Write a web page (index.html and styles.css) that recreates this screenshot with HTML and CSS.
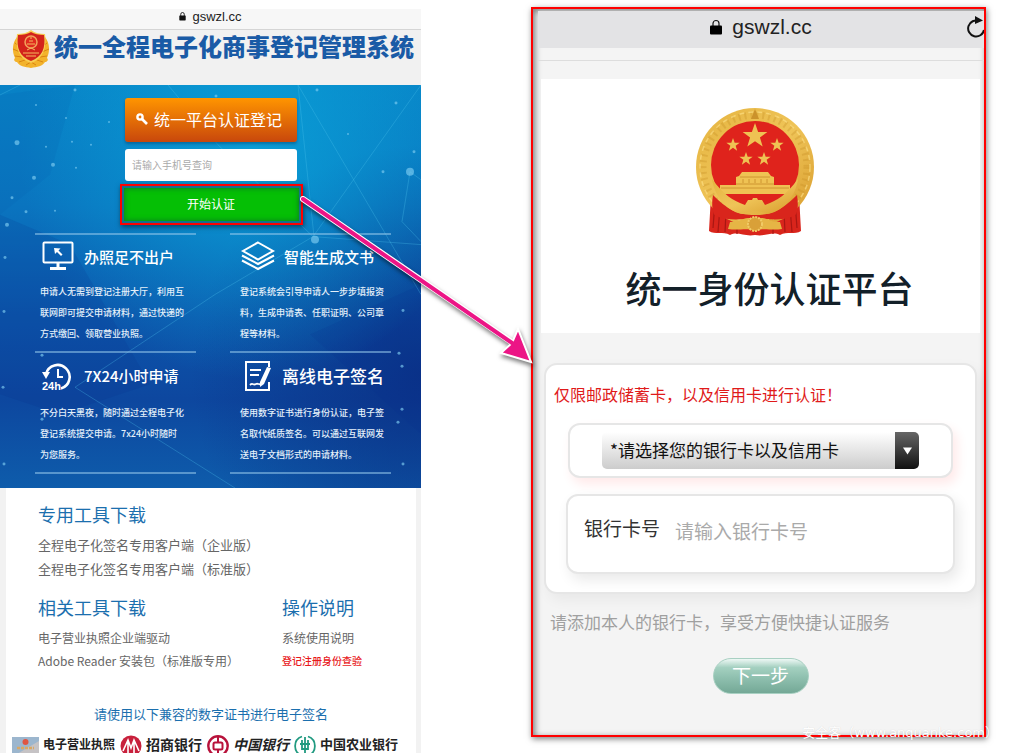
FILE: index.html
```html
<!DOCTYPE html>
<html lang="zh-CN">
<head>
    <meta charset="utf-8">
    <meta name="viewport" content="width=device-width, initial-scale=1.0">
    <title>gswzl.cc</title>
    <link rel="stylesheet" href="styles.css">
</head>
<body>
<main class="figure">
    <section class="phone">
        <div class="address">
            <svg class="lock" viewBox="0 0 12 16"><path d="M3 8V5a3 3 0 0 1 6 0v3" fill="none" stroke="#111" stroke-width="1.500"/><rect x="0.500" y="7" width="11" height="8.500" rx="1" fill="#111"/></svg>
            <span>gswzl.cc</span>
        </div>
        <header class="site-header">
            <svg class="badge" viewBox="0 0 38 38">
                <path d="M5 7C0 13 0 22 3 28c-2 2 0 4 2 4 2 4 8 5 14 6 6-1 12-2 14-6 2 0 4-2 2-4 3-6 3-15-2-21l-4 4v12L19 33 9 23V11z" fill="#f3b32c"/>
                <path d="M3 13l5 4M1 19l7 3M3 26l7 1M7 32l6-2M35 13l-5 4M37 19l-7 3M35 26l-7 1M31 32l-6-2M14 35l5-3 5 3" stroke="#d98512" fill="none"/>
                <path d="M5 4c5 0 10-1 14-4 4 3 9 4 14 4 2 14-2 25-14 29C7 29 3 18 5 4z" fill="#f8cf54"/>
                <path d="M6 5c5 0 10-1 13-3 3 2 8 3 13 3 2 13-2 22-13 26C8 27 4 18 6 5z" fill="#d3231b"/>
                <circle cx="19" cy="12" r="6" fill="#e02b1e" stroke="#f2a35b" stroke-width="1.500"/>
                <path d="M15 14h8M17 11h4M19 7v2M15 20l4-2 4 2M11 23h16M14 26h10" stroke="#f4bd5f" fill="none"/>
            </svg>
            <h1>统一全程电子化商事登记管理系统</h1>
        </header>
        <div class="hero">
            <svg class="network" viewBox="0 0 421 404" preserveAspectRatio="none">
                <path d="M0 10L75 0 50 90 0 130z" fill="#065fae" opacity=".15"/>
                <path d="M0 130L70 160 150 300 60 330 0 310z" fill="#062c8a" opacity=".14"/>
                <path d="M421 200L310 250 421 350z" fill="#062c8a" opacity=".12"/>
                <path d="M75 303L215 210M215 210L313 152M75 303L235 404M168 0l50 60 95 92M298 0l16 152M298 0l123 210M313 152L421 0M0 10L20 0M313 152L421 160M410 87l-8 50 19 20M410 87l11 8" stroke="#4fc6ee" opacity=".3" fill="none"/>
                <g fill="#7fcdf2" opacity=".65">
                    <circle cx="315" cy="155" r="4"/><circle cx="410" cy="87" r="4"/><circle cx="17" cy="58" r="2.500"/><circle cx="53" cy="80" r="2"/><circle cx="34" cy="93" r="2"/><circle cx="216" cy="11" r="1.500"/><circle cx="317" cy="5" r="1.500"/><circle cx="396" cy="18" r="1.500"/><circle cx="414" cy="67" r="1.500"/><circle cx="383" cy="87" r="1.500"/><circle cx="348" cy="49" r="1"/><circle cx="75" cy="5" r="1.500"/><circle cx="66" cy="33" r="1"/><circle cx="109" cy="37" r="1"/><circle cx="36" cy="20" r="1"/><circle cx="72" cy="57" r="1"/><circle cx="46" cy="62" r="1"/><circle cx="91" cy="60" r="1"/><circle cx="76" cy="83" r="1"/><circle cx="12" cy="113" r="1.500"/><circle cx="26" cy="127" r="1.500"/><circle cx="55" cy="126" r="1"/><circle cx="7" cy="140" r="2"/><circle cx="4" cy="227" r="1.500"/><circle cx="5" cy="173" r="1.500"/><circle cx="42" cy="271" r="1.500"/><circle cx="3" cy="303" r="1.500"/><circle cx="42" cy="335" r="1.500"/><circle cx="4" cy="380" r="1.500"/><circle cx="403" cy="226" r="1.500"/><circle cx="399" cy="269" r="1.500"/><circle cx="402" cy="282" r="1.500"/><circle cx="402" cy="325" r="1.500"/><circle cx="398" cy="338" r="1.500"/><circle cx="403" cy="380" r="1.500"/>
                </g>
            </svg>
            <div class="signup">
                <button type="button" class="register">
                    <svg class="key" viewBox="0 0 12 12"><circle cx="4" cy="4" r="2.600" fill="none" stroke="#fff" stroke-width="2.400"/><path d="M6 6l5 5" stroke="#fff" stroke-width="2.600"/></svg>
                    统一平台认证登记
                </button>
                <input type="text" class="mobile" placeholder="请输入手机号查询" aria-label="手机号">
                <div class="marked"><button type="button" class="start">开始认证</button></div>
            </div>
            <div class="features">
                <article class="feature">
                    <h2>
                        <svg class="icon" viewBox="0 0 32 30" fill="none" stroke="#fff" stroke-width="2"><rect x="1.500" y="1.500" width="29" height="20" rx="1"/><path d="M16 22v5M8 27.500h16" stroke-width="3"/><path d="M12 7l1 6 2-2 4 4 1.500-1.500-4-4 2-2z" fill="#fff" stroke="none"/></svg>
                        办照足不出户
                    </h2>
                    <p>申请人无需到登记注册大厅，利用互<br>联网即可提交申请材料，通过快递的<br>方式缴回、领取营业执照。</p>
                </article>
                <article class="feature right">
                    <h2>
                        <svg class="icon" viewBox="0 0 34 30" fill="none" stroke="#fff" stroke-width="2"><path d="M17 1.500L32 10 17 18.500 2 10z"/><path d="M1 14.500L17 23l16-8.500M1 19.500L17 28l16-8.500"/></svg>
                        智能生成文书
                    </h2>
                    <p>登记系统会引导申请人一步步填报资<br>料，生成申请表、任职证明、公司章<br>程等材料。</p>
                </article>
                <article class="feature tall">
                    <h2>
                        <svg class="icon" viewBox="0 0 32 30" fill="none" stroke="#fff" stroke-width="2.600"><path d="M4 13A12 12 0 1 1 19 27.500"/><path d="M0 11h8l-4 7z" fill="#fff" stroke="none"/><path d="M16 8v8h5" stroke-width="2"/><text x="0" y="29" class="hours">24h</text></svg>
                        7X24小时申请
                    </h2>
                    <p>不分白天黑夜，随时通过全程电子化<br>登记系统提交申请。7x24小时随时<br>为您服务。</p>
                </article>
                <article class="feature right tall">
                    <h2 class="large">
                        <svg class="icon" viewBox="0 0 34 30" fill="none" stroke="#fff" stroke-width="2"><path d="M28 6V1H5v28h23v-8"/><path d="M9 9h11M9 14h9M9 24c3-3 3 1 6-1 2-1 3 1 5 0" stroke-width="1.800"/><path d="M26 6l4 1-7 16-4 3v-5z" fill="#fff" stroke="none"/></svg>
                        离线电子签名
                    </h2>
                    <p>使用数字证书进行身份认证，电子签<br>名取代纸质签名。可以通过互联网发<br>送电子文档形式的申请材料。</p>
                </article>
            </div>
        </div>
        <div class="downloads">
            <section class="tools">
                <h3>专用工具下载</h3>
                <a href="#">全程电子化签名专用客户端（企业版）</a>
                <a href="#">全程电子化签名专用客户端（标准版）</a>
            </section>
            <div class="more">
                <section>
                    <h3>相关工具下载</h3>
                    <a href="#">电子营业执照企业端驱动</a>
                    <a href="#">Adobe Reader 安装包（标准版专用）</a>
                </section>
                <section>
                    <h3>操作说明</h3>
                    <a href="#">系统使用说明</a>
                    <a href="#" class="check">登记注册身份查验</a>
                </section>
            </div>
            <p class="certs">请使用以下兼容的数字证书进行电子签名</p>
            <div class="partners">
                <span class="partner license">
                    <svg viewBox="0 0 27 22"><rect y="2" width="27" height="20" fill="#9cb6ce"/><path d="M0 22L27 6v16z" fill="#c6c3c5"/><circle cx="13.500" cy="7" r="3" fill="#df5543"/><path d="M5 13h17" stroke="#d9a865" stroke-width="2.500" stroke-dasharray="3 1"/></svg>
                    电子营业执照
                </span>
                <span class="partner merchants">
                    <svg viewBox="0 0 22 22"><circle cx="11" cy="11" r="10.500" fill="#c8203c"/><path d="M3 16L8 5l3 8 3-8 5 11M8 5v13M14 5v13" fill="none" stroke="#fff" stroke-width="1.600"/></svg>
                    招商银行
                </span>
                <span class="partner boc">
                    <svg viewBox="0 0 22 22" fill="none" stroke="#b8123b" stroke-width="2.400"><circle cx="11" cy="11" r="9.700"/><rect x="6.500" y="7.500" width="9" height="7" rx="1.500" stroke-width="2"/><path d="M11 1v6M11 15v6" stroke-width="2"/></svg>
                    中国银行
                </span>
                <span class="partner abc">
                    <svg viewBox="0 0 22 22" fill="none" stroke="#209a80" stroke-width="1.800"><path d="M8 1.500a10 10 0 0 0 0 19M14 1.500a10 10 0 0 1 0 19M11 2v18M8 5v9h6V5M6 9h10"/></svg>
                    中国农业银行
                </span>
            </div>
        </div>
    </section>

    <section class="phone-large">
        <div class="address-large">
            <svg class="lock" viewBox="0 0 12 16"><path d="M3 8V5a3 3 0 0 1 6 0v3" fill="none" stroke="#111" stroke-width="1.200"/><rect y="7" width="12" height="9" rx="1" fill="#000"/></svg>
            <span>gswzl.cc</span>
            <svg class="reload" viewBox="0 0 18 22" fill="none" stroke="#111" stroke-width="2"><path d="M13 5A8 8 0 1 0 18 14"/><path d="M9 0l8 4.500L9 8z" fill="#111" stroke="none"/></svg>
        </div>
        <div class="screen">
            <div class="platform">
                <svg class="emblem" viewBox="0 0 120 130">
                    <defs>
                        <linearGradient id="gold" x1="0" y1="0" x2="1" y2="1"><stop offset="0" stop-color="#e5b440"/><stop offset=".5" stop-color="#efc458"/><stop offset="1" stop-color="#d79a2a"/></linearGradient>
                        <path id="star" d="M0-10L2.400-3.100 9.500-3.100 3.800 1.200 5.900 8.100 0 4-5.900 8.100-3.800 1.200-9.500-3.100-2.400-3.100z"/>
                    </defs>
                    <path d="M16 88l-2 36c6 4 14 0 21 4 8-4 14 2 25 0 11 2 17-4 25 0 7-4 15 0 21-4l-2-36z" fill="#d9251c"/>
                    <path d="M20 95l-2 26M25 100l-2 25M31 105l-1 20M100 95l2 26M95 100l2 25M89 105l1 20M42 119v8M78 119v8" stroke="#a91713" stroke-width="1.200"/>
                    <circle cx="60" cy="60" r="59" fill="url(#gold)"/>
                    <circle cx="60" cy="60" r="52" fill="none" stroke="#c38a22" stroke-width="7" stroke-dasharray="2 4" opacity=".3"/>
                    <circle cx="60" cy="60" r="55" fill="none" stroke="#ffe28b" stroke-width="1.500" stroke-dasharray="5 4" opacity=".6"/>
                    <circle cx="60" cy="58" r="44" fill="#df231c"/>
                    <path d="M56 12h8l-4-10z" fill="#cb922b"/>
                    <g fill="#efc253">
                        <use href="#star" transform="translate(60 29) scale(1.300)"/>
                        <use href="#star" transform="translate(38 38) scale(.7)"/>
                        <use href="#star" transform="translate(82 38) scale(.7)"/>
                        <use href="#star" transform="translate(51 52) scale(.7)"/>
                        <use href="#star" transform="translate(69 52) scale(.7)"/>
                        <path d="M44 69l3-4h26l3 4 3 1v8h16v9H25v-9h16v-8z"/>
                    </g>
                    <path d="M45 70h30M41 77h38M26 81h68M48 72v4M54 72v4M60 72v4M66 72v4M72 72v4" stroke="#c28422" fill="none" opacity=".7"/>
                    <path d="M18 88c15 15 25 20 42 20s27-5 42-20c2 12 0 20-3 21-12 5-22 3-39 3s-27 2-39-3c-3-1-5-9-3-21z" fill="#d9251c"/>
                    <path d="M17 72c11 15 21 22 33 26l3-5 4 0 1-2h4l1 2 4 0 3 5c12-4 22-11 33-26-3 21-19 34-31 35-9-4-15-4-24 0-12-1-28-14-31-35z" fill="url(#gold)"/>
                    <path d="M35 115c11 0 12-4 18-4h14c6 0 7 4 18 4l2 7c-12 2-18-2-27 2-9-4-15 0-27-2z" fill="#e6b545"/>
                    <circle cx="60" cy="117" r="7" fill="#d9a038" stroke="#f1cb67" stroke-width="2" stroke-dasharray="2 1"/>
                </svg>
                <h2>统一身份认证平台</h2>
            </div>
            <div class="card">
                <p class="notice">仅限邮政储蓄卡，以及信用卡进行认证！</p>
                <div class="box bank">
                    <select aria-label="银行卡">
                        <option>*请选择您的银行卡以及信用卡</option>
                    </select>
                    <span class="caret"><svg viewBox="0 0 10 8"><path d="M0 0h10L5 8z" fill="#fff"/></svg></span>
                </div>
                <div class="box number">
                    <label for="card-number">银行卡号</label>
                    <input type="text" id="card-number" placeholder="请输入银行卡号">
                </div>
            </div>
            <p class="hint">请添加本人的银行卡，享受方便快捷认证服务</p>
            <button type="button" class="next">下一步</button>
        </div>
    </section>
    <svg class="arrow" viewBox="0 0 240 175">
        <path d="M6 6L213 148" stroke="#fff" stroke-width="6" stroke-linecap="round"/>
        <path d="M234 169L204 160 215 150 221 136z" fill="#ec1586" stroke="#fff" stroke-width="2"/>
        <path d="M6 6L218 152" stroke="#ec1586" stroke-width="4" stroke-linecap="round"/>
    </svg>
    <span class="watermark">安全客（www.anquanke.com）</span>
</main>
</body>
</html>
```
FILE: styles.css
```css
* {
    box-sizing: border-box;
}
body {
    margin: 0;
    background: #fff;
    font-family: "Noto Sans CJK SC", sans-serif;
}
h1, h2, h3, p {
    margin: 0;
}
a {
    text-decoration: none;
}
button, input, select {
    font-family: inherit;
    border: none;
    outline: none;
}
svg {
    display: block;
    flex: none;
}
.figure {
    position: relative;
    display: grid;
    grid-template-columns: 421fr 455fr;
    column-gap: 110px;
    align-items: start;
    padding-right: 30px;
    overflow: hidden;
}

/* left screen */
.phone {
    margin-top: 9px;
    background: #f2f2f2;
}
.address {
    display: flex;
    justify-content: center;
    align-items: center;
    gap: 6px;
    height: 21px;
    padding-bottom: 6px;
    background: #f7f7f7;
    border-bottom: 1px solid #d5d5d5;
    font: 13px "Liberation Sans", sans-serif;
    color: #222;
}
.address .lock {
    width: 7px;
    height: 10px;
}
.site-header {
    display: flex;
    align-items: flex-start;
    gap: 4px;
    height: 55px;
    padding-left: 12px;
    background: #f1f1f1;
}
.badge {
    width: 38px;
    height: 38px;
}
.site-header h1 {
    font-size: 24px;
    line-height: 32px;
    font-weight: 900;
    color: #1a5ba6;
    white-space: nowrap;
}
.hero {
    position: relative;
    padding: 13px 30px 14px 35px;
    background: radial-gradient(circle at 60% 15%, rgba(10, 165, 218, 0.8), rgba(15, 140, 205, 0) 55%), radial-gradient(circle at 100% 72%, rgba(10, 45, 130, 0.8), rgba(10, 45, 130, 0) 45%), linear-gradient(180deg, #0882c6 0%, #0a74bf 30%, #0c55ab 58%, #0d479f 78%, #0e5cab 100%);
}
.network {
    position: absolute;
    left: 0;
    top: 0;
    width: 100%;
    height: 100%;
}
.signup {
    position: relative;
    display: flex;
    flex-direction: column;
    align-items: center;
    margin-bottom: 8px;
    padding-right: 4px;
}
.register, .mobile {
    width: 172px;
    border-radius: 3px;
}
.register {
    display: flex;
    justify-content: center;
    align-items: center;
    gap: 6px;
    height: 44px;
    padding: 0 4px 2px 0;
    font-size: 16px;
    color: #fff;
    background: linear-gradient(#ff9500, #c8470c);
    box-shadow: 0 2px 3px rgba(0, 50, 90, 0.4);
}
.key {
    width: 12px;
    height: 12px;
}
.mobile {
    height: 32px;
    margin: 7px 0 3px;
    padding: 0 7px 2px;
    font-size: 10px;
    background: #fff;
}
.mobile::placeholder {
    color: #aaa;
}
.marked {
    width: 183px;
    height: 41px;
    padding: 2px;
    border: 2px solid #f00;
    background: #16708c;
    box-shadow: 1px 2px 5px rgba(0, 0, 0, 0.5);
}
.start {
    width: 100%;
    height: 100%;
    padding: 0 0 2px;
    background: #05bf05;
    box-shadow: inset 0 0 5px 1px #0a8a1c;
    color: #fff;
    font-size: 12px;
}
.features {
    position: relative;
    display: grid;
    grid-template-columns: 1fr 1fr;
    column-gap: 34px;
}
.feature {
    border-top: 2px solid rgba(150, 200, 235, 0.55);
    padding: 0 0 7px 5px;
    color: #fff;
}
.feature.right {
    padding-left: 10px;
}
.feature.tall {
    border-bottom: 2px solid rgba(150, 200, 235, 0.55);
}
.feature h2 {
    display: flex;
    align-items: center;
    gap: 8px;
    height: 46px;
    padding-bottom: 4px;
    font-size: 15px;
    font-weight: 500;
    white-space: nowrap;
}
.feature.tall h2 {
    height: 49px;
}
.feature h2.large {
    font-size: 17px;
    gap: 6px;
}
.icon {
    width: 36px;
    height: 30px;
}
.hours {
    font: bold 11px "Liberation Sans", sans-serif;
    fill: #fff;
    stroke: none;
}
.feature p {
    font-size: 9px;
    line-height: 21px;
    font-weight: 500;
    color: #e4f0fa;
    white-space: nowrap;
}
.downloads {
    margin: 0 5px 0 6px;
    padding-top: 12px;
    background: #fff;
}
.downloads section {
    display: flex;
    flex-direction: column;
    font-size: 12px;
    line-height: 23px;
}
.downloads h3 {
    margin-bottom: 5px;
    font-size: 18px;
    line-height: 28px;
    font-weight: 400;
    color: #1b6fae;
}
.downloads a {
    color: #666;
    white-space: nowrap;
}
.downloads .tools {
    padding-left: 32px;
    font-size: 13px;
    line-height: 24px;
}
.more {
    display: grid;
    grid-template-columns: 244fr 134fr;
    padding: 12px 0 0 32px;
}
.downloads .check {
    color: #e8191c;
    font-size: 10px;
    font-weight: 500;
}
.certs {
    padding: 30px 0 9px;
    font-size: 13px;
    line-height: 24px;
    text-align: center;
    color: #1b6fae;
}
.partners {
    display: flex;
    align-items: flex-start;
    gap: 5px;
    height: 18px;
    padding-left: 6px;
    overflow: hidden;
}
.partner {
    display: flex;
    align-items: flex-start;
    gap: 4px;
    height: 18px;
    line-height: 18px;
    font-weight: 700;
    color: #222;
    white-space: nowrap;
}
.partner svg {
    width: 22px;
    height: 22px;
}
.partner.license {
    font-size: 12px;
}
.license svg {
    width: 27px;
}
.partner.merchants {
    font-size: 14px;
}
.partner.boc {
    font-size: 14px;
    font-style: italic;
}
.partner.abc {
    font-size: 13px;
}

/* right screen */
.phone-large {
    margin-top: 7px;
    padding: 2px 0 0 5px;
    height: 730px;
    border: 2px solid #f00;
    background: #f4f4f4;
    box-shadow: 1px 2px 6px rgba(0, 0, 0, 0.5), inset 2px 2px 6px rgba(0, 0, 0, 0.5);
}
.address-large {
    position: relative;
    display: flex;
    justify-content: center;
    align-items: center;
    gap: 10px;
    height: 37px;
    padding-bottom: 6px;
    background: #e3e3e5;
    font: 21px "Liberation Sans", sans-serif;
    color: #222;
}
.address-large .lock {
    width: 12px;
    height: 17px;
}
.reload {
    position: absolute;
    right: 0;
    top: 5px;
    width: 18px;
    height: 22px;
}
.screen {
    margin-top: 12px;
    padding: 18px 4px 0 3px;
    border-top: 1px solid #ddd;
}
.platform {
    display: flex;
    flex-direction: column;
    align-items: center;
    height: 254px;
    padding: 28px 0 0;
    background: #fff;
}
.emblem {
    width: 120px;
    height: 130px;
    margin-right: 12px;
}
.platform h2 {
    margin-top: 24px;
    padding-left: 18px;
    font-size: 36px;
    line-height: 52px;
    font-weight: 500;
    color: #132029;
    white-space: nowrap;
}
.card {
    margin: 30px 3px 0;
    padding: 15px 20px 18px;
    border: 2px solid #e6e6e6;
    border-radius: 13px;
    background: #fff;
    box-shadow: 4px 6px 14px rgba(0, 0, 0, 0.05);
}
.notice {
    margin: 0 -12px 15px;
    font-size: 16px;
    line-height: 28px;
    color: #e01a1a;
    white-space: nowrap;
}
.box {
    display: flex;
    border: 2px solid #e6e6e6;
    border-radius: 12px;
    background: #fff;
}
.bank {
    height: 55px;
    margin: 0 2px 16px;
    padding: 7px 32px;
    box-shadow: 4px 6px 12px rgba(255, 0, 0, 0.09);
}
.bank select {
    flex: 1;
    min-width: 0;
    appearance: none;
    padding: 0 8px 2px;
    border-radius: 5px 0 0 5px;
    background: linear-gradient(#fff, #ccc);
    font-size: 17px;
    color: #111;
}
.caret {
    display: flex;
    justify-content: center;
    align-items: center;
    width: 24px;
    border-radius: 0 5px 5px 0;
    background: linear-gradient(#666, #111);
}
.caret svg {
    width: 9px;
    height: 8px;
}
.number {
    align-items: flex-start;
    gap: 15px;
    height: 80px;
    padding: 17px 16px;
    box-shadow: 4px 6px 14px rgba(0, 0, 0, 0.09);
}
.number label, .number input {
    font-size: 19px;
    line-height: 30px;
    color: #333;
}
.number input {
    flex: 1;
    min-width: 0;
    height: 34px;
    padding: 0;
    background: none;
}
.number input::placeholder {
    color: #aaa;
}
.hint {
    margin: 14px 0 22px 9px;
    font-size: 17px;
    line-height: 28px;
    color: #a0a0a0;
    white-space: nowrap;
}
.next {
    display: block;
    width: 96px;
    height: 36px;
    margin: 0 auto;
    padding: 0 0 2px;
    border: 1px solid #a8d0c2;
    border-radius: 18px;
    background: linear-gradient(#eef8f5, #a4d0c0 25%, #8fc0af 55%, #74a896);
    color: #fff;
    font-size: 19px;
    line-height: 30px;
}

/* pointer between the screens */
.arrow {
    position: absolute;
    left: 297px;
    top: 193px;
    width: 240px;
    height: 175px;
    filter: drop-shadow(1px 3px 2px rgba(0, 0, 0, 0.5));
}
.watermark {
    position: absolute;
    right: 18px;
    bottom: 10px;
    font: 13px/20px "DejaVu Sans", "Noto Sans CJK SC", sans-serif;
    color: #fff;
    text-shadow: 0 0 1px rgba(0, 0, 0, 0.15);
}
```
